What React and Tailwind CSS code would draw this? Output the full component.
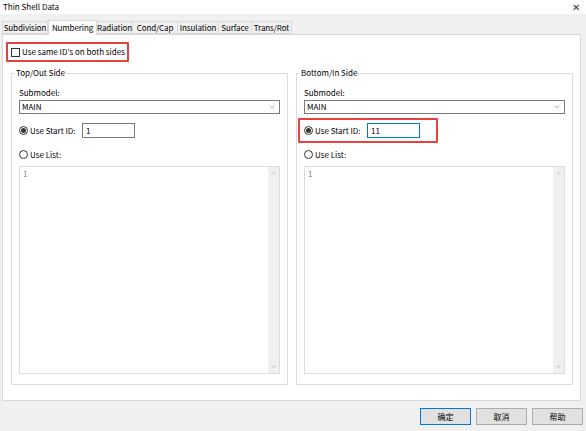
import { ChevronDown, ChevronUp } from "lucide-react"

const font = { fontFamily: '"Noto Sans CJK SC", "Noto Sans", sans-serif' }

const tabs = [
  { label: "Subdivision", w: "w-[46px]" },
  { label: "Numbering", w: "w-[49px]" },
  { label: "Radiation", w: "w-[36px]" },
  { label: "Cond/Cap", w: "w-[45px]" },
  { label: "Insulation", w: "w-[41px]" },
  { label: "Surface", w: "w-[33px]" },
  { label: "Trans/Rot", w: "w-[40px]" },
]

function Radio({ checked }) {
  return (
    <span className="flex h-[9px] w-[9px] shrink-0 items-center justify-center rounded-full border border-[#333] bg-white">
      {checked && <span className="h-[5px] w-[5px] rounded-full bg-[#333]" />}
    </span>
  )
}

function SidePanel({ title, value, highlight, focused }) {
  return (
    <div className="relative flex h-[312px] flex-1 flex-col border border-[#dcdcdc] px-[7px]">
      <span className="absolute -top-[7px] left-[3px] whitespace-nowrap bg-white px-[1px] text-[8px] leading-[12px]">{title}</span>
      <div className="mt-[13px] text-[8px] leading-[12px]">Submodel:</div>
      <div className="mt-[1px] flex h-[14px] items-center justify-between border border-[#7a7a7a] bg-white pl-[2px] pr-[3px]">
        <span className="text-[8px] leading-none">MAIN</span>
        <ChevronDown className="h-[8px] w-[8px] text-[#555]" strokeWidth={1.5} />
      </div>
      <div className={`-mx-[6px] mt-[4px] flex h-[25px] w-[140px] items-center pl-[4px] ${highlight ? "rounded-[1px] border-2 border-[#e8403d]" : "border-2 border-transparent"}`}>
        <Radio checked />
        <span className="ml-[2px] whitespace-nowrap text-[8px] leading-none">Use Start ID:</span>
        <div className={`ml-auto mr-[16px] flex h-[15px] w-[53px] shrink-0 items-center border bg-white px-[3px] text-[8px] ${focused ? "border-[#0078d7]" : "border-[#7a7a7a]"}`}>{value}</div>
      </div>
      <div className="mt-[7px] flex items-center">
        <Radio />
        <span className="ml-[2px] whitespace-nowrap text-[8px] leading-none">Use List:</span>
      </div>
      <div className="mt-[7px] flex h-[208px] border border-[#dcdcdc] bg-white">
        <span className="flex-1 pl-[3px] pt-[1px] text-[8px] leading-[12px] text-[#808080]">1</span>
        <div className="flex w-[11px] flex-col items-center justify-between bg-[#f0f0f0] py-[3px]">
          <ChevronUp className="h-[7px] w-[7px] text-[#a0a0a0]" strokeWidth={2} />
          <ChevronDown className="h-[7px] w-[7px] text-[#a0a0a0]" strokeWidth={2} />
        </div>
      </div>
    </div>
  )
}

function Btn({ children, primary }) {
  return (
    <div className={`flex h-[17px] w-[51px] items-center justify-center border bg-[#e1e1e1] text-[8px] leading-none ${primary ? "border-[#0078d7]" : "border-[#adadad]"}`}>{children}</div>
  )
}

export default function App() {
  return (
    <div className="flex h-[431px] w-[586px] flex-col bg-[#f0f0f0] text-black" style={font}>
      <div className="flex h-[14px] items-center justify-between bg-white pl-[3px] pr-[6px]">
        <span className="text-[8px] leading-none">Thin Shell Data</span>
        <span className="text-[10px] leading-none text-[#333]">✕</span>
      </div>
      <div className="mt-[6px] flex items-end pl-[2px]">
        {tabs.map((t) => (
          <div
            key={t.label}
            className={
              t.label === "Numbering"
                ? `relative z-10 -mb-[1px] flex h-[15px] items-center justify-center whitespace-nowrap border border-b-0 border-[#d9d9d9] bg-white text-[8px] tracking-[-0.1px] ${t.w}`
                : `flex h-[13px] items-center justify-center whitespace-nowrap border border-l-0 border-[#d9d9d9] text-[8px] tracking-[-0.1px] first:border-l ${t.w}`
            }
          >
            {t.label}
          </div>
        ))}
      </div>
      <div className="mx-[2px] mr-[5px] flex h-[367px] flex-col border border-[#d9d9d9] bg-white">
        <div className="ml-[3px] mt-[7px] flex h-[20px] w-[123px] items-center rounded-[1px] border-2 border-[#e8403d] pl-[3px]">
          <span className="h-[9px] w-[9px] shrink-0 border border-[#333] bg-white" />
          <span className="ml-[2px] whitespace-nowrap text-[8px] leading-none">Use same ID's on both sides</span>
        </div>
        <div className="mt-[11px] flex gap-[8px] pl-[8px] pr-[7px]">
          <SidePanel title="Top/Out Side" value="1" />
          <SidePanel title="Bottom/In Side" value="11" highlight focused />
        </div>
      </div>
      <div className="mt-[7px] flex justify-end gap-[5px] pr-[3px]">
        <Btn primary>确定</Btn>
        <Btn>取消</Btn>
        <Btn>帮助</Btn>
      </div>
    </div>
  )
}
